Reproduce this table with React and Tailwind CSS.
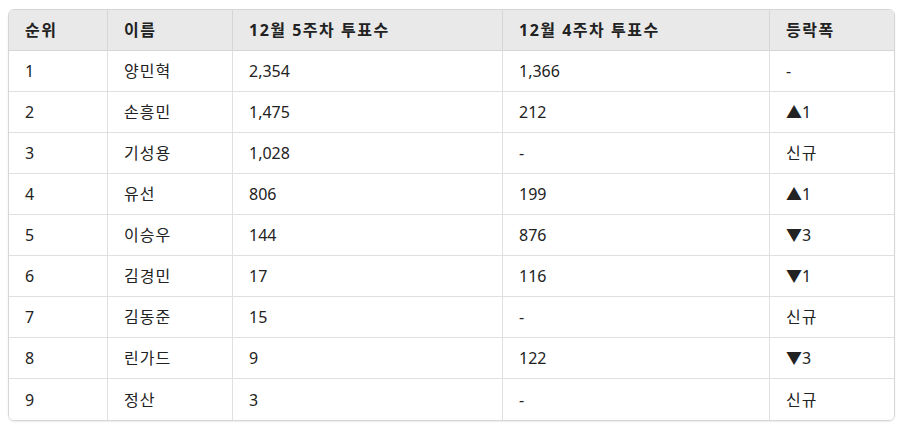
import React from "react";

const rows = [
  ["1", "양민혁", "2,354", "1,366", "-"],
  ["2", "손흥민", "1,475", "212", "▲1"],
  ["3", "기성용", "1,028", "-", "신규"],
  ["4", "유선", "806", "199", "▲1"],
  ["5", "이승우", "144", "876", "▼3"],
  ["6", "김경민", "17", "116", "▼1"],
  ["7", "김동준", "15", "-", "신규"],
  ["8", "린가드", "9", "122", "▼3"],
  ["9", "정산", "3", "-", "신규"],
];

const headers = ["순위", "이름", "12월 5주차 투표수", "12월 4주차 투표수", "등락폭"];

export default function App() {
  return (
    <div
      className="w-[900px] h-[429px] bg-white pt-[9px] pl-[8px]"
      style={{ fontFamily: '"Noto Sans", "Noto Sans CJK KR", sans-serif' }}
    >
      <div className="w-[887px] rounded-[6px] border border-[#d6d6d6] overflow-hidden shadow-[0_1px_2px_rgba(0,0,0,0.08)] text-[16px] text-[#222]">
        <div className="grid grid-cols-[99px_125px_270px_267px_1fr] h-[41px] bg-[#e9e9e9] font-bold border-b border-[#d6d6d6]">
          {headers.map((h, i) => (
            <div
              key={i}
              className={`flex items-center pl-[16px] tracking-[1.5px] ${i < 4 ? "border-r border-[#d6d6d6]" : ""}`}
            >
              {h}
            </div>
          ))}
        </div>
        {rows.map((r, ri) => (
          <div
            key={ri}
            className={`grid grid-cols-[99px_125px_270px_267px_1fr] h-[41px] bg-white ${ri < rows.length - 1 ? "border-b border-[#e0e0e0]" : ""}`}
          >
            {r.map((c, i) => (
              <div
                key={i}
                className={`flex items-center pl-[16px] ${
                  i === 1 || c === "신규" ? "tracking-[1px]" : ""
                } ${i < 4 ? "border-r border-[#e0e0e0]" : ""}`}
              >
                {c}
              </div>
            ))}
          </div>
        ))}
      </div>
    </div>
  );
}
